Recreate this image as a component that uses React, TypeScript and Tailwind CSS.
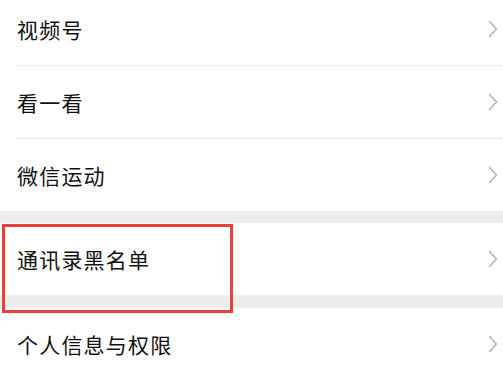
const font = '"Noto Sans CJK SC", "Noto Sans", sans-serif';

const Chevron = () => (
  <svg width="10" height="18" viewBox="0 0 10 18" fill="none" className="shrink-0">
    <path d="M1.5 1.5 L8.5 9 L1.5 16.5" stroke="#b5b5b5" strokeWidth="1.6" strokeLinecap="round" strokeLinejoin="round" />
  </svg>
);

const Row = ({ label, divider }: { label: string; divider?: boolean }) => (
  <div className="bg-white">
    <div className="h-[72px] flex items-center justify-between pl-[17px] pr-[5px]">
      <span className="text-[21px] text-[#111111] leading-none tracking-[1.2px]">{label}</span>
      <Chevron />
    </div>
    {divider && <div className="ml-[16px] h-px bg-[#ededed]" />}
  </div>
);

export default function App() {
  return (
    <div className="relative w-[503px] h-[378px] overflow-hidden bg-white" style={{ fontFamily: font }}>
      <div className="mt-[-7px] flex flex-col">
        <Row label="视频号" divider />
        <Row label="看一看" divider />
        <Row label="微信运动" />
        <div className="h-[12px] bg-[#ededed]" />
        <Row label="通讯录黑名单" />
        <div className="h-[13px] bg-[#ededed]" />
        <Row label="个人信息与权限" />
      </div>

      {/* highlight box */}
      <div className="absolute left-[2px] top-[224px] w-[231px] h-[89px] border-[3px] border-[#e8413c]" />
    </div>
  );
}
